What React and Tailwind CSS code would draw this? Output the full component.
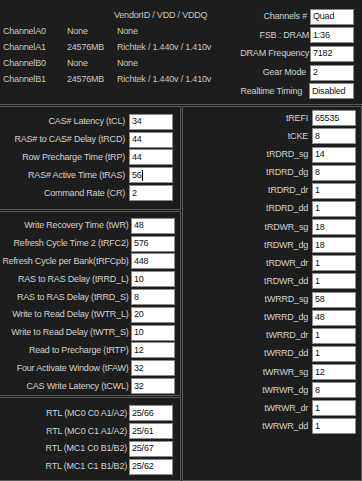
import React from "react";

const channels = [
  ["ChannelA0", "None", "None"],
  ["ChannelA1", "24576MB", "Richtek / 1.440v / 1.410v"],
  ["ChannelB0", "None", "None"],
  ["ChannelB1", "24576MB", "Richtek / 1.440v / 1.410v"],
];

// label, value, gap before box, box width
const topRight = [
  ["Channels #", "Quad", "ml-[3px]", "w-[44px]"],
  ["FSB : DRAM", "1:36", "ml-[1px]", "w-[44px]"],
  ["DRAM Frequency", "7182", "ml-[1px]", "w-[44px]"],
  ["Gear Mode", "2", "ml-[4px]", "w-[44px]"],
  ["Realtime Timing", "Disabled", "ml-[7px]", "w-[45px]"],
];

const primary = [
  ["CAS# Latency (tCL)", "34"],
  ["RAS# to CAS# Delay (tRCD)", "44"],
  ["Row Precharge Time (tRP)", "44"],
  ["RAS# Active Time (tRAS)", "56", true],
  ["Command Rate (CR)", "2"],
];

const secondary = [
  ["Write Recovery Time (tWR)", "48"],
  ["Refresh Cycle Time 2 (tRFC2)", "576"],
  ["Refresh Cycle per Bank(tRFCpb)", "448"],
  ["RAS to RAS Delay (tRRD_L)", "10"],
  ["RAS to RAS Delay (tRRD_S)", "8"],
  ["Write to Read Delay (tWTR_L)", "20"],
  ["Write to Read Delay (tWTR_S)", "10"],
  ["Read to Precharge (tRTP)", "12"],
  ["Four Activate Window (tFAW)", "32"],
  ["CAS Write Latency (tCWL)", "32"],
];

const rtl = [
  ["RTL (MC0 C0 A1/A2)", "25/66"],
  ["RTL (MC0 C1 A1/A2)", "25/61"],
  ["RTL (MC1 C0 B1/B2)", "25/67"],
  ["RTL (MC1 C1 B1/B2)", "25/62"],
];

const tertiary = [
  ["tREFI", "65535"],
  ["tCKE", "8"],
  ["tRDRD_sg", "14"],
  ["tRDRD_dg", "8"],
  ["tRDRD_dr", "1"],
  ["tRDRD_dd", "1"],
  ["tRDWR_sg", "18"],
  ["tRDWR_dg", "18"],
  ["tRDWR_dr", "1"],
  ["tRDWR_dd", "1"],
  ["tWRRD_sg", "58"],
  ["tWRRD_dg", "48"],
  ["tWRRD_dr", "1"],
  ["tWRRD_dd", "1"],
  ["tWRWR_sg", "12"],
  ["tWRWR_dg", "8"],
  ["tWRWR_dr", "1"],
  ["tWRWR_dd", "1"],
];

function Field({ value, width = "w-[44px]", cursor }) {
  return (
    <div
      className={`${width} h-[16px] shrink-0 bg-white border border-[#8a8a8a] text-[#111] pl-[2px] flex items-center`}
    >
      {value}
      {cursor && <span className="inline-block w-px h-[11px] bg-black" />}
    </div>
  );
}

function Row({ label, value, cursor, gap = "ml-[4px]", height = "h-[17.8px]" }) {
  return (
    <div className={`${height} flex items-center justify-end`}>
      <span className="whitespace-nowrap">{label}</span>
      <div className={gap}>
        <Field value={value} cursor={cursor} />
      </div>
    </div>
  );
}

export default function App() {
  return (
    <div className="w-[362px] h-[481px] overflow-hidden bg-[#1d1d1d] text-[#d2d2d2] text-[9px] leading-none tracking-[-0.2px] font-['Liberation_Sans',Arial,sans-serif]">
      {/* TOP: channel info + settings */}
      <div className="h-[105px] flex border-b border-[#585858]">
        <div className="w-[236px] pt-[7px] text-[#c8c8c8]">
          <div className="h-[16px] flex items-center pl-[114px]">VendorID / VDD / VDDQ</div>
          {channels.map((c) => (
            <div key={c[0]} className="h-[16px] flex items-center">
              <span className="w-[67px] pl-[3px]">{c[0]}</span>
              <span className="w-[50px]">{c[1]}</span>
              <span className="whitespace-nowrap">{c[2]}</span>
            </div>
          ))}
        </div>
        <div className="flex-1 flex flex-col items-end pr-[8px] pt-[7.5px]">
          {topRight.map(([label, value, gap, width]) => (
            <div key={label} className="h-[18.6px] flex items-center justify-end">
              <span className="whitespace-nowrap">{label}</span>
              <div className={gap}>
                <Field value={value} width={width} />
              </div>
            </div>
          ))}
        </div>
      </div>

      {/* BOTTOM: timing panels */}
      <div className="mt-[1px] h-[375px] flex">
        <div className="w-[181px] flex flex-col">
          <div className="h-[104px] border border-l-0 border-[#585858] pt-[6px] pr-[7px]">
            {primary.map(([l, v, c]) => (
              <Row key={l} label={l} value={v} cursor={c} />
            ))}
          </div>
          <div className="mt-[1px] h-[185px] border border-l-0 border-[#585858] pt-[5px] pr-[5px]">
            {secondary.map(([l, v]) => (
              <Row key={l} label={l} value={v} gap="ml-[2.5px]" />
            ))}
          </div>
          <div className="mt-[1px] flex-1 border border-l-0 border-[#585858] pt-[6.5px] pr-[7px]">
            {rtl.map(([l, v]) => (
              <Row key={l} label={l} value={v} gap="ml-[2px]" />
            ))}
          </div>
        </div>
        <div className="ml-[1px] flex-1 border border-[#585858] pt-[2.2px] pr-[5px]">
          {tertiary.map(([l, v]) => (
            <Row key={l} label={l} value={v} height="h-[18.14px]" />
          ))}
        </div>
      </div>
    </div>
  );
}
